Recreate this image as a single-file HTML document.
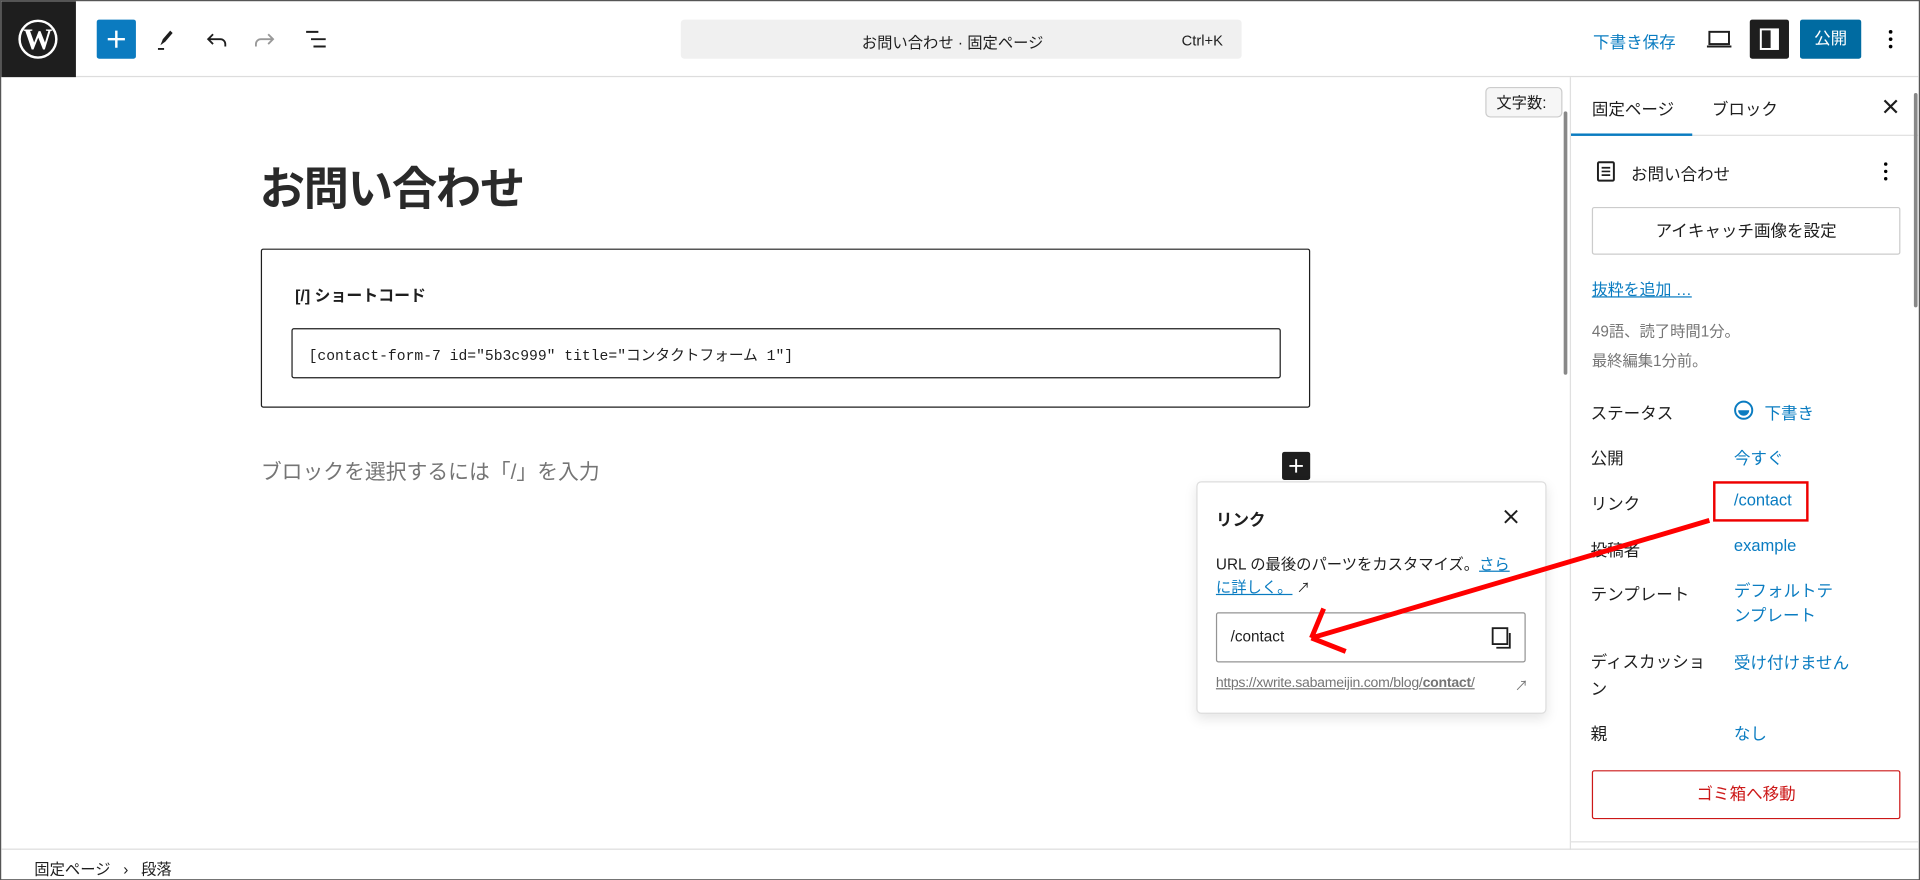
<!DOCTYPE html>
<html><head><meta charset="utf-8">
<style>
html,body{margin:0;padding:0;width:1920px;height:880px;overflow:hidden;background:#fff}
#w{position:absolute;left:0;top:0;width:1568px;height:719px;transform:scale(1.22449);transform-origin:0 0;font-family:"Liberation Sans","Noto Sans CJK JP",sans-serif;color:#1e1e1e;font-size:13px;box-sizing:border-box;border:1px solid #555;overflow:hidden}
.a{position:absolute;white-space:nowrap}
.blue{color:#0a7cc1}
.gray{color:#757575}
svg{position:absolute}
</style></head><body><div id="w">
<!-- top bar -->
<div class="a" style="left:0;top:0;width:1568px;height:61px;border-bottom:1px solid #ddd"></div>
<div class="a" style="left:0;top:0;width:61px;height:62px;background:#1e1e1e"></div>
<svg style="left:13px;top:14px" width="34" height="34" viewBox="0 0 34 34"><circle cx="17" cy="17" r="15" fill="none" stroke="#fff" stroke-width="2"/><text x="17" y="25" text-anchor="middle" font-family="Liberation Serif" font-weight="bold" font-size="24" fill="#fff">W</text></svg>
<div class="a" style="left:78px;top:15px;width:32px;height:32px;background:#0b7bc0;border-radius:2px"></div>
<svg style="left:84px;top:21px" width="20" height="20"><path d="M10 3v14M3 10h14" stroke="#fff" stroke-width="2"/></svg>
<svg style="left:124px;top:21px" width="20" height="20"><path d="M6 15l2-5 6-7 2 2-6 7z" fill="#1e1e1e"/><path d="M4 18h5" stroke="#1e1e1e" stroke-width="1.5"/></svg>
<svg style="left:166px;top:21px" width="20" height="20"><path d="M7 6l-4 4 4 4M3 10h10a4 4 0 0 1 4 4v2" fill="none" stroke="#1e1e1e" stroke-width="1.5"/></svg>
<svg style="left:205px;top:21px" width="20" height="20"><path d="M13 6l4 4-4 4M17 10H7a4 4 0 0 0-4 4v2" fill="none" stroke="#999" stroke-width="1.5"/></svg>
<svg style="left:247px;top:21px" width="22" height="20"><path d="M2 4h10M6 10h12M8 16h10" stroke="#1e1e1e" stroke-width="1.6"/></svg>
<div class="a" style="left:555px;top:15px;width:458px;height:32px;background:#f0f0f0;border-radius:3px"></div>
<div class="a" style="left:555px;top:23px;width:444px;text-align:center;font-size:12.5px">お問い合わせ · 固定ページ</div>
<div class="a" style="left:964px;top:25px;font-size:12px">Ctrl+K</div>
<div class="a blue" style="left:1300px;top:22px;font-size:13.5px">下書き保存</div>
<svg style="left:1392px;top:22px" width="22" height="18"><rect x="3" y="3" width="16" height="10" fill="none" stroke="#1e1e1e" stroke-width="1.6"/><path d="M1 15h20" stroke="#1e1e1e" stroke-width="1.6"/></svg>
<div class="a" style="left:1428px;top:15px;width:32px;height:32px;background:#1e1e1e;border-radius:2px"></div>
<svg style="left:1434px;top:21px" width="20" height="20"><rect x="3" y="2" width="14" height="16" fill="none" stroke="#fff" stroke-width="1.6"/><rect x="11" y="2" width="6" height="16" fill="#fff"/></svg>
<div class="a" style="left:1469px;top:15px;width:50px;height:32px;background:#006ba1;border-radius:2px;color:#fff;text-align:center;line-height:32px;font-size:13.5px">公開</div>
<svg style="left:1536px;top:21px" width="14" height="20"><circle cx="7" cy="4" r="1.5"/><circle cx="7" cy="10" r="1.5"/><circle cx="7" cy="16" r="1.5"/></svg>

<!-- editor -->
<div class="a" style="left:1212px;top:70px;width:63px;height:25px;border:1px solid #ccc;border-radius:4px;background:#f6f6f6;font-size:12.5px;line-height:24px;padding-left:8px;box-sizing:border-box">文字数:</div>
<div class="a" style="left:1276px;top:90px;width:3px;height:215px;background:#888;border-radius:2px"></div>
<div class="a" style="left:211px;top:123px;font-size:37px;font-weight:bold;color:#2a2a2a;letter-spacing:-1px">お問い合わせ</div>
<div class="a" style="left:212px;top:202px;width:857px;height:130px;border:1px solid #1e1e1e;box-sizing:border-box;border-radius:2px"></div>
<div class="a" style="left:240px;top:230px;font-size:13px;font-weight:bold">[/] ショートコード</div>
<div class="a" style="left:237px;top:267px;width:808px;height:41px;border:1px solid #1e1e1e;box-sizing:border-box;border-radius:2px"></div>
<div class="a" style="left:251px;top:280px;font-family:'Liberation Mono','Noto Sans CJK JP',monospace;font-size:12px">[contact-form-7 id="5b3c999" title="コンタクトフォーム 1"]</div>
<div class="a gray" style="left:212px;top:370px;font-size:17px">ブロックを選択するには「/」を入力</div>
<div class="a" style="left:1046px;top:368px;width:23px;height:23px;background:#1e1e1e;border-radius:2px"></div>
<svg style="left:1049px;top:371px" width="17" height="17"><path d="M8.5 3v11M3 8.5h11" stroke="#fff" stroke-width="1.6"/></svg>

<!-- popover -->
<div class="a" style="left:976px;top:392px;width:286px;height:190px;border:1px solid #ddd;border-radius:4px;background:#fff;box-shadow:0 4px 10px rgba(0,0,0,.1);box-sizing:border-box"></div>
<div class="a" style="left:992px;top:412px;font-size:13.5px;font-weight:bold">リンク</div>
<svg style="left:1225px;top:413px" width="16" height="16"><path d="M3 3l10 10M13 3L3 13" stroke="#1e1e1e" stroke-width="1.6"/></svg>
<div class="a" style="left:992px;top:451px;font-size:12.5px;line-height:19px;color:#1e1e1e">URL の最後のパーツをカスタマイズ。<span class="blue" style="text-decoration:underline">さら</span><br><span class="blue" style="text-decoration:underline">に詳しく。</span> <span style="font-size:11px">↗</span></div>
<div class="a" style="left:992px;top:499px;width:253px;height:41px;border:1px solid #949494;box-sizing:border-box;border-radius:2px"></div>
<div class="a" style="left:1004px;top:512px;font-size:12.5px">/contact</div>
<svg style="left:1215px;top:510px" width="20" height="20"><rect x="3" y="2" width="12" height="13" fill="none" stroke="#1e1e1e" stroke-width="1.5"/><path d="M17 6v12H6" fill="none" stroke="#1e1e1e" stroke-width="1.5"/></svg>
<div class="a gray" style="left:992px;top:551px;font-size:11.5px;text-decoration:underline;letter-spacing:-0.2px">https://xwrite.sabameijin.com/blog/<b>contact</b>/</div>
<div class="a gray" style="left:1236px;top:551px;font-size:11px">↗</div>

<!-- sidebar -->
<div class="a" style="left:1281px;top:62px;width:1px;height:631px;background:#e0e0e0"></div>
<div class="a" style="left:1282px;top:109px;width:286px;height:1px;background:#e0e0e0"></div>
<div class="a" style="left:1282px;top:108px;width:99px;height:2px;background:#0a7cc1"></div>
<div class="a" style="left:1299px;top:77px;font-size:13.5px">固定ページ</div>
<div class="a" style="left:1397px;top:77px;font-size:13.5px">ブロック</div>
<svg style="left:1535px;top:78px" width="16" height="16"><path d="M3 3l10 10M13 3L3 13" stroke="#1e1e1e" stroke-width="1.8"/></svg>
<div class="a" style="left:1562px;top:75px;width:3px;height:175px;background:#888;border-radius:2px"></div>
<svg style="left:1302px;top:130px" width="18" height="18"><rect x="2" y="1.5" width="13" height="15" rx="1" fill="none" stroke="#1e1e1e" stroke-width="1.6"/><path d="M5 6h7M5 9h7M5 12h7" stroke="#1e1e1e" stroke-width="1.4"/></svg>
<div class="a" style="left:1331px;top:130px;font-size:13.5px">お問い合わせ</div>
<svg style="left:1532px;top:129px" width="14" height="20"><circle cx="7" cy="4" r="1.4"/><circle cx="7" cy="10" r="1.4"/><circle cx="7" cy="16" r="1.4"/></svg>
<div class="a" style="left:1299px;top:168px;width:252px;height:39px;border:1px solid #ccc;box-sizing:border-box;border-radius:2px;text-align:center;line-height:37px;font-size:13.5px">アイキャッチ画像を設定</div>
<div class="a blue" style="left:1299px;top:225px;font-size:13px;text-decoration:underline">抜粋を追加 …</div>
<div class="a gray" style="left:1299px;top:258px;font-size:12.5px;line-height:24px">49語、読了時間1分。<br>最終編集1分前。</div>
<div class="a" style="left:1298px;top:325px;font-size:13.5px">ステータス</div>
<svg style="left:1414px;top:325px" width="18" height="18"><circle cx="9" cy="9" r="7" fill="none" stroke="#0a7cc1" stroke-width="1.6"/><path d="M4.5 9h9a4.5 4.5 0 0 1-9 0z" fill="#0a7cc1"/></svg>
<div class="a blue" style="left:1440px;top:325px;font-size:13.5px">下書き</div>
<div class="a" style="left:1298px;top:362px;font-size:13.5px">公開</div>
<div class="a blue" style="left:1415px;top:362px;font-size:13.5px">今すぐ</div>
<div class="a" style="left:1298px;top:399px;font-size:13.5px">リンク</div>
<div class="a blue" style="left:1415px;top:400px;font-size:13.5px">/contact</div>
<div class="a" style="left:1398px;top:392px;width:78px;height:33px;border:2px solid #e00;box-sizing:border-box"></div>
<div class="a" style="left:1298px;top:437px;font-size:13.5px">投稿者</div>
<div class="a blue" style="left:1415px;top:437px;font-size:13.5px">example</div>
<div class="a" style="left:1298px;top:473px;font-size:13.5px">テンプレート</div>
<div class="a blue" style="left:1415px;top:472px;font-size:13.5px;line-height:20px">デフォルトテ<br>ンプレート</div>
<div class="a" style="left:1298px;top:529px;font-size:13.5px;line-height:22px">ディスカッショ<br>ン</div>
<div class="a blue" style="left:1415px;top:529px;font-size:13.5px">受け付けません</div>
<div class="a" style="left:1298px;top:587px;font-size:13.5px">親</div>
<div class="a blue" style="left:1415px;top:587px;font-size:13.5px">なし</div>
<div class="a" style="left:1299px;top:628px;width:252px;height:40px;border:1px solid #cc1818;box-sizing:border-box;border-radius:2px;text-align:center;line-height:38px;font-size:13.5px;color:#cc1818">ゴミ箱へ移動</div>
<div class="a" style="left:1282px;top:686px;width:286px;height:1px;background:#e0e0e0"></div>

<!-- footer -->
<div class="a" style="left:0;top:692px;width:1568px;height:1px;background:#ddd"></div>
<div class="a" style="left:27px;top:698px;font-size:12.5px">固定ページ&nbsp;&nbsp;&nbsp;›&nbsp;&nbsp;&nbsp;段落</div>

<!-- red arrow -->
<svg style="left:0;top:0" width="1568" height="719"><path d="M1395 424L1070 520M1070 520L1080 496M1070 520L1098 531" fill="none" stroke="#f00" stroke-width="4" stroke-linecap="butt"/></svg>
</div></body></html>
